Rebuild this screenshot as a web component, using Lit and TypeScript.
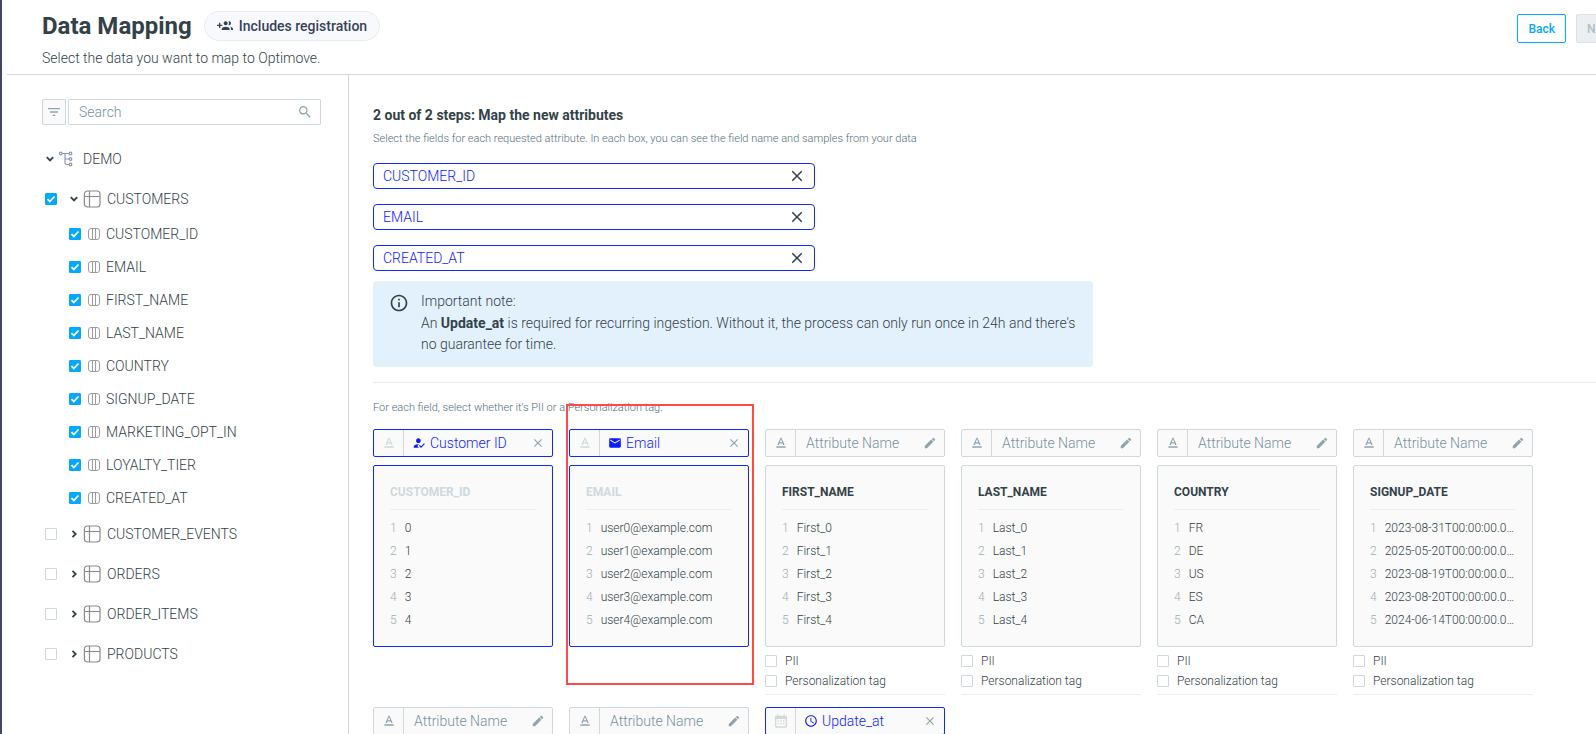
import { LitElement, html, css, svg, nothing } from "lit";
import { customElement, property } from "lit/decorators.js";
import { classMap } from "lit/directives/class-map.js";

const paths = {
  groupAdd:
    "M8 10H5V7H3v3H0v2h3v3h2v-3h3v-2zm10 1c1.66 0 2.99-1.34 2.99-3S19.66 5 18 5c-.32 0-.63.05-.91.14.57.81.9 1.79.9 2.86s-.34 2.04-.9 2.86c.28.09.59.14.91.14zm-5 0c1.66 0 2.99-1.34 2.99-3S14.66 5 13 5s-3 1.34-3 3 1.34 3 3 3zm6.62 2.16c.83.73 1.38 1.66 1.38 2.84v2h3v-2c0-1.54-2.37-2.49-4.38-2.84zM13 13c-2 0-6 1-6 3v2h12v-2c0-2-4-3-6-3z",
  filter: "M10 18h4v-2h-4v2zM3 6v2h18V6H3zm3 7h12v-2H6v2z",
  search:
    "M15.5 14h-.79l-.28-.27A6.47 6.47 0 0016 9.5 6.5 6.5 0 109.5 16c1.61 0 3.09-.59 4.23-1.57l.27.28v.79l5 4.99L20.49 19l-4.99-5zm-6 0C7.01 14 5 11.99 5 9.5S7.01 5 9.5 5 14 7.01 14 9.5 11.99 14 9.5 14z",
  close:
    "M19 6.41L17.59 5 12 10.59 6.41 5 5 6.41 10.59 12 5 17.59 6.41 19 12 13.41 17.59 19 19 17.59 13.41 12z",
  info: "M11 7h2v2h-2V7zm0 4h2v6h-2v-6zm1-9C6.48 2 2 6.48 2 12s4.48 10 10 10 10-4.48 10-10S17.52 2 12 2zm0 18c-4.41 0-8-3.59-8-8s3.59-8 8-8 8 3.59 8 8-3.59 8-8 8z",
  edit: "M3 17.25V21h3.75L17.81 9.94l-3.75-3.75L3 17.25zM20.71 7.04a1 1 0 000-1.41l-2.34-2.34a1 1 0 00-1.41 0l-1.83 1.83 3.75 3.75 1.83-1.83z",
  text: "M5 17v2h14v-2H5zm4.5-4.2h5l.9 2.2h2.1L12.75 4h-1.5L6.5 15h2.1l.9-2.2zM12 5.98L13.87 11h-3.74L12 5.98z",
  customer:
    "M9 17l3-2.94c-.39-.04-.68-.06-1-.06-2.67 0-8 1.34-8 4v2h9l-3-3zm2-5c2.21 0 4-1.79 4-4s-1.79-4-4-4-4 1.79-4 4 1.79 4 4 4m4.47 8.5L12 17l1.4-1.41 2.07 2.08 5.13-5.17 1.4 1.41z",
  mail: "M20 4H4c-1.1 0-1.99.9-1.99 2L2 18c0 1.1.9 2 2 2h16c1.1 0 2-.9 2-2V6c0-1.1-.9-2-2-2zm0 4l-8 5-8-5V6l8 5 8-5v2z",
  clock:
    "M11.99 2C6.47 2 2 6.48 2 12s4.47 10 9.99 10C17.52 22 22 17.52 22 12S17.52 2 11.99 2zM12 20c-4.42 0-8-3.58-8-8s3.58-8 8-8 8 3.58 8 8-3.58 8-8 8zm.5-13H11v6l5.25 3.15.75-1.23-4.5-2.67z",
  calendar:
    "M19 4h-1V2h-2v2H8V2H6v2H5a2 2 0 00-2 2v14a2 2 0 002 2h14a2 2 0 002-2V6a2 2 0 00-2-2zm0 16H5V9h14v11zM7 11h2v2H7zm4 0h2v2h-2zm4 0h2v2h-2zm-8 4h2v2H7zm4 0h2v2h-2zm4 0h2v2h-2z",
};

type IconName = keyof typeof paths;

const icon = (name: IconName, size: number) => html`<svg
  class="icon"
  width=${size}
  height=${size}
  viewBox="0 0 24 24"
  fill="currentColor"
  aria-hidden="true"
>
  ${svg`<path d=${paths[name]} />`}
</svg>`;

const chevron = (open: boolean) => html`<svg
  class="icon"
  width="10"
  height="10"
  viewBox="0 0 10 10"
  fill="none"
  stroke="currentColor"
  stroke-width="1.8"
  aria-hidden="true"
>
  ${open ? svg`<path d="M1.8 3.2 5 6.4 8.2 3.2" />` : svg`<path d="M3.5 1.8 6.7 5 3.5 8.2" />`}
</svg>`;

const treeIcon = html`<svg
  class="icon"
  width="16"
  height="16"
  viewBox="0 0 16 16"
  fill="none"
  stroke="#9096b0"
  stroke-width="1.2"
  aria-hidden="true"
>
  <circle cx="2.8" cy="2.5" r="1.3" />
  <circle cx="12.5" cy="2.5" r="1.3" />
  <circle cx="12.5" cy="8" r="1.3" />
  <circle cx="12.5" cy="13.5" r="1.3" />
  <path d="M4.1 2.5h7.1M7 2.5v9.5q0 1.5 1.5 1.5h2.7M7 8h4.2" />
</svg>`;

const tableIcon = html`<svg
  class="icon"
  width="18"
  height="18"
  viewBox="0 0 18 18"
  fill="none"
  stroke="#8a8a8a"
  stroke-width="1.2"
  aria-hidden="true"
>
  <rect x="1.4" y="1" width="15.6" height="16" rx="3" />
  <path d="M1.4 6.5h15.6M6.5 1v16" />
</svg>`;

const columnIcon = html`<svg
  class="icon"
  width="12"
  height="12"
  viewBox="0 0 12 12"
  fill="none"
  stroke="#9c9c9c"
  aria-hidden="true"
>
  <rect x="0.5" y="0.5" width="11" height="11" rx="2.5" />
  <path d="M4.5 0.5v11M7.5 0.5v11" />
</svg>`;

const base = css`
  *,
  *::before,
  *::after {
    box-sizing: border-box;
  }
  .icon {
    display: block;
    flex: none;
  }
  button,
  input {
    font: inherit;
    color: inherit;
    margin: 0;
  }
  .plain {
    border: 0;
    background: none;
    padding: 0;
    cursor: pointer;
    flex: none;
  }
  .check {
    appearance: none;
    flex: none;
    width: 12px;
    height: 12px;
    border: 1px solid #cfd8dc;
    border-radius: 1px;
    background: #fff;
  }
  .check:checked {
    border-color: #03a9ff;
    background: #03a9ff
      url("data:image/svg+xml,%3Csvg xmlns='http://www.w3.org/2000/svg' viewBox='0 0 10 10'%3E%3Cpath d='M1.5 5.2l2.3 2.3 4.7-5' fill='none' stroke='white' stroke-width='1.8'/%3E%3C/svg%3E")
      center / 10px 10px no-repeat;
  }
`;

interface Field {
  name: string;
  type: IconName;
  samples: string[];
  mapped?: { label: string; icon: IconName };
}

@customElement("field-card")
class FieldCard extends LitElement {
  @property({ attribute: false }) field!: Field;

  static styles = [
    base,
    css`
      :host {
        display: flex;
        flex-direction: column;
        gap: 8px;
      }
      .head {
        display: flex;
        align-items: center;
        height: 28px;
        border: 1px solid #cfd8dc;
        border-radius: 2px;
        background: #fafafa;
        color: #90a4ae;
        font-size: 14px;
      }
      .type {
        align-self: stretch;
        display: grid;
        place-items: center;
        width: 30px;
        border-right: 1px solid #cfd8dc;
      }
      .label {
        flex: 1;
        min-width: 0;
        display: flex;
        align-items: center;
        gap: 4px;
        padding-left: 8px;
      }
      .name {
        flex: 1;
        min-width: 0;
        border: 0;
        padding: 0 0 0 10px;
        background: none;
        outline: none;
      }
      .name::placeholder {
        color: #78909c;
        opacity: 1;
      }
      .action {
        display: grid;
        place-items: center;
        width: 28px;
        height: 26px;
      }
      .body {
        border: 1px solid #cfd8dc;
        border-radius: 2px;
        background: #fafafa;
        padding: 16px 16px 14px;
      }
      .title {
        margin: 0;
        height: 28px;
        line-height: 20px;
        border-bottom: 1px solid #eceff1;
        font-size: 12px;
        font-weight: 700;
      }
      .samples {
        list-style: none;
        margin: 7px 0 0;
        padding: 0;
        font-size: 12px;
      }
      .sample {
        display: flex;
        gap: 8px;
        line-height: 23px;
      }
      .index {
        color: #9badb6;
      }
      .value {
        overflow: hidden;
        text-overflow: ellipsis;
        white-space: nowrap;
      }
      .mapped .head,
      .mapped .body {
        border-color: #0d2bff;
      }
      .mapped .type,
      .mapped .title {
        color: #cfd8dc;
      }
      .mapped .label {
        color: #0d1bff;
      }
      .stack {
        display: contents;
      }
      .flags {
        display: flex;
        flex-direction: column;
        gap: 8px;
        padding-bottom: 7px;
        border-bottom: 1px solid #eceff1;
        font-size: 12px;
      }
      .flag {
        display: flex;
        align-items: center;
        gap: 8px;
        line-height: 12px;
      }
    `,
  ];

  render() {
    const { name, type, samples, mapped } = this.field;
    return html`<div class=${classMap({ stack: true, mapped: !!mapped })}>
      <div class="head">
        <span class="type">${icon(type, 16)}</span>
        ${mapped
          ? html`<span class="label">${icon(mapped.icon, 14)}${mapped.label}</span>
              <button class="plain action" aria-label="Remove ${mapped.label}">${icon("close", 14)}</button>`
          : html`<input class="name" placeholder="Attribute Name" aria-label="Attribute name for ${name}" />
              <button class="plain action" aria-label="Edit attribute name">${icon("edit", 14)}</button>`}
      </div>
      <div class="body">
        <h3 class="title">${name}</h3>
        <ol class="samples">
          ${samples.map(
            (s, i) => html`<li class="sample"><span class="index">${i + 1}</span><span class="value">${s}</span></li>`
          )}
        </ol>
      </div>
      ${mapped
        ? nothing
        : html`<div class="flags">
            <label class="flag"><input class="check" type="checkbox" />PII</label>
            <label class="flag"><input class="check" type="checkbox" />Personalization tag</label>
          </div>`}
    </div>`;
  }
}

const numbered = (prefix: string, suffix = "") => [0, 1, 2, 3, 4].map((n) => `${prefix}${n}${suffix}`);

const fields: Field[] = [
  { name: "CUSTOMER_ID", type: "text", samples: numbered(""), mapped: { label: "Customer ID", icon: "customer" } },
  { name: "EMAIL", type: "text", samples: numbered("user", "@example.com"), mapped: { label: "Email", icon: "mail" } },
  { name: "FIRST_NAME", type: "text", samples: numbered("First_") },
  { name: "LAST_NAME", type: "text", samples: numbered("Last_") },
  { name: "COUNTRY", type: "text", samples: ["FR", "DE", "US", "ES", "CA"] },
  {
    name: "SIGNUP_DATE",
    type: "text",
    samples: ["2023-08-31", "2025-05-20", "2023-08-19", "2023-08-20", "2024-06-14"].map((d) => `${d}T00:00:00.000Z`),
  },
  { name: "MARKETING_OPT_IN", type: "text", samples: [] },
  { name: "LOYALTY_TIER", type: "text", samples: [] },
  { name: "CREATED_AT", type: "calendar", samples: [], mapped: { label: "Update_at", icon: "clock" } },
];

const columns = [
  "CUSTOMER_ID",
  "EMAIL",
  "FIRST_NAME",
  "LAST_NAME",
  "COUNTRY",
  "SIGNUP_DATE",
  "MARKETING_OPT_IN",
  "LOYALTY_TIER",
  "CREATED_AT",
];

@customElement("app-root")
class AppRoot extends LitElement {
  static styles = [
    base,
    css`
      :host {
        display: block;
        height: 100vh;
        overflow: hidden;
        border-left: 2px solid #43466a;
        background: #fff;
        color: #334249;
        font: 300 14px/20px Roboto, sans-serif;
      }
      .shell {
        display: flex;
        flex-direction: column;
        width: calc(100% + 56px);
        height: 100%;
        padding-left: 5px;
      }
      .header {
        display: flex;
        justify-content: space-between;
        align-items: flex-start;
        flex: none;
        height: 75px;
        padding: 11px 29px 0 35px;
        border-bottom: 1px solid #cfd8dc;
      }
      .heading {
        display: flex;
        align-items: center;
        gap: 12px;
      }
      .title {
        margin: 0;
        font-size: 24px;
        line-height: 30px;
        font-weight: 700;
      }
      .badge {
        display: flex;
        align-items: center;
        gap: 6px;
        height: 30px;
        padding: 0 12px;
        border: 1px solid #e8ebf0;
        border-radius: 15px;
        background: #f8f9fc;
        color: #37415a;
        font-weight: 500;
      }
      .subtitle {
        margin: 7px 0 0;
      }
      .actions {
        display: flex;
        gap: 10px;
        padding-top: 3px;
      }
      .button {
        height: 29px;
        padding: 0 10px;
        border: 1px solid #03a9ff;
        border-radius: 2px;
        background: #fff;
        color: #03a9ff;
        font-size: 12px;
        font-weight: 500;
      }
      .button:disabled {
        border-color: #dde2e6;
        background: #eceff1;
        color: #b0bec5;
      }
      .content {
        display: flex;
        flex: 1;
        min-height: 0;
      }
      .sidebar {
        flex: none;
        width: 342px;
        padding: 24px 27px 0 35px;
        border-right: 1px solid #cfd8dc;
      }
      .searchbar {
        display: flex;
        gap: 2px;
        height: 26px;
        margin-bottom: 14px;
      }
      .filter {
        display: grid;
        place-items: center;
        width: 24px;
        padding: 0;
        border: 1px solid #cfd8dc;
        border-radius: 1px;
        background: #fafafa;
        color: #90a4ae;
      }
      .search {
        flex: 1;
        display: flex;
        align-items: center;
        padding: 0 7px 0 10px;
        border: 1px solid #cfd8dc;
        border-radius: 1px;
        color: #90a4ae;
      }
      .query {
        flex: 1;
        min-width: 0;
        border: 0;
        padding: 0;
        outline: none;
        background: none;
      }
      .query::placeholder {
        color: #78909c;
        opacity: 1;
      }
      .tree,
      .columns {
        list-style: none;
        margin: 0;
        padding: 0;
      }
      .columns {
        display: grid;
        gap: 1px;
        margin-top: -1px;
      }
      .row {
        display: flex;
        align-items: center;
        height: 40px;
        padding-left: 3px;
      }
      .toggle {
        display: grid;
        place-items: center;
        width: 12px;
        height: 12px;
      }
      .table {
        gap: 3px;
      }
      .table .toggle {
        margin-left: 8px;
      }
      .root {
        padding-left: 2px;
        gap: 2px;
      }
      .root .pair {
        gap: 9px;
      }
      .column {
        height: 32px;
        padding-left: 27px;
        gap: 7px;
      }
      .pair {
        display: flex;
        align-items: center;
        gap: 6px;
      }
      .main {
        flex: 1;
        min-width: 0;
        padding: 30px 0 0 24px;
      }
      .step {
        margin: 0 0 6px;
        font-size: 14px;
        line-height: 20px;
        font-weight: 700;
      }
      .hint {
        margin: 0;
        color: #546e7a;
        font-size: 11px;
        line-height: 16px;
      }
      .selected {
        display: grid;
        gap: 15px;
        max-width: 442px;
        margin: 16px 0 10px;
      }
      .picked {
        display: flex;
        align-items: center;
        height: 26px;
        padding: 0 8px 0 9px;
        border: 1px solid #0d2bff;
        border-radius: 4px;
      }
      .picked-value {
        flex: 1;
        min-width: 0;
        border: 0;
        padding: 0;
        outline: none;
        background: none;
        color: #0d1bff;
      }
      .note {
        display: flex;
        gap: 12px;
        max-width: 720px;
        padding: 10px 16px 12px;
        border-radius: 4px;
        background: #e3f1fd;
        line-height: 21px;
      }
      .note .icon {
        margin: 2px 0 0;
      }
      .note p {
        margin: 0 0 1px;
      }
      .note p:last-child {
        margin: 0;
      }
      .note b {
        font-weight: 700;
      }
      .rule {
        margin: 15px 0 17px;
        border: 0;
        border-top: 1px solid #e9edf0;
      }
      .canvas {
        position: relative;
      }
      .cards {
        display: grid;
        grid-template-columns: repeat(auto-fill, 180px);
        gap: 12px 16px;
        margin-top: 13px;
      }
      .highlight {
        position: absolute;
        top: 4px;
        left: 193px;
        width: 188px;
        height: 281px;
        border: 2px solid #ff4a4a;
        pointer-events: none;
      }
    `,
  ];

  private table(name: string, open = false) {
    return html`<li>
      <div class="row table">
        <input class="check" type="checkbox" aria-label=${name} .checked=${open} />
        <button class="plain toggle" aria-label="Toggle ${name}">${chevron(open)}</button>
        <span class="pair">${tableIcon}${name}</span>
      </div>
      ${open
        ? html`<ul class="columns">
            ${columns.map(
              (c) => html`<li>
                <label class="row column">
                  <input class="check" type="checkbox" .checked=${true} />
                  <span class="pair">${columnIcon}${c}</span>
                </label>
              </li>`
            )}
          </ul>`
        : nothing}
    </li>`;
  }

  render() {
    return html`<div class="shell">
      <header class="header">
        <div>
          <div class="heading">
            <h1 class="title">Data Mapping</h1>
            <span class="badge">${icon("groupAdd", 16)}Includes registration</span>
          </div>
          <p class="subtitle">Select the data you want to map to Optimove.</p>
        </div>
        <div class="actions">
          <button class="button">Back</button>
          <button class="button" disabled>Next</button>
        </div>
      </header>
      <div class="content">
        <aside class="sidebar">
          <div class="searchbar">
            <button class="filter" aria-label="Filter">${icon("filter", 16)}</button>
            <label class="search">
              <input class="query" type="text" placeholder="Search" aria-label="Search" />${icon("search", 16)}
            </label>
          </div>
          <div class="row root">
            <button class="plain toggle" aria-label="Toggle DEMO">${chevron(true)}</button>
            <span class="pair">${treeIcon}<span>DEMO</span></span>
          </div>
          <ul class="tree">
            ${this.table("CUSTOMERS", true)}
            ${["CUSTOMER_EVENTS", "ORDERS", "ORDER_ITEMS", "PRODUCTS"].map((t) => this.table(t))}
          </ul>
        </aside>
        <main class="main">
          <h2 class="step">2 out of 2 steps: Map the new attributes</h2>
          <p class="hint">
            Select the fields for each requested attribute. In each box, you can see the field name and samples from
            your data
          </p>
          <div class="selected">
            ${["CUSTOMER_ID", "EMAIL", "CREATED_AT"].map(
              (f) => html`<div class="picked">
                <input class="picked-value" readonly aria-label="Selected field" .value=${f} />
                <button class="plain" aria-label="Clear ${f}">${icon("close", 18)}</button>
              </div>`
            )}
          </div>
          <section class="note">
            ${icon("info", 20)}
            <div>
              <p>Important note:</p>
              <p>
                An <b>Update_at</b> is required for recurring ingestion. Without it, the process can only run once in
                24h and there's no guarantee for time.
              </p>
            </div>
          </section>
          <hr class="rule" />
          <div class="canvas">
            <p class="hint">For each field, select whether it's PII or a Personalization tag.</p>
            <div class="cards">${fields.map((f) => html`<field-card .field=${f}></field-card>`)}</div>
            <div class="highlight"></div>
          </div>
        </main>
      </div>
    </div>`;
  }
}
